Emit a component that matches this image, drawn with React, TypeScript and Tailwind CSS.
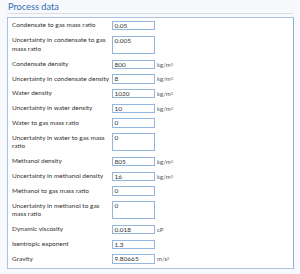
import React from 'react';

type Field = {
  label: React.ReactNode;
  value: string;
  unit?: React.ReactNode;
  tall?: boolean;
};

const kgm3 = (
  <>
    kg/m<sup className="text-[3.8px] relative -top-[1px]">3</sup>
  </>
);

const fields: Field[] = [
  { label: 'Condensate to gas mass ratio', value: '0.05' },
  { label: <>Uncertainty in condensate to gas<br />mass ratio</>, value: '0.005', tall: true },
  { label: 'Condensate density', value: '800', unit: kgm3 },
  { label: 'Uncertainty in condensate density', value: '8', unit: kgm3 },
  { label: 'Water density', value: '1020', unit: kgm3 },
  { label: 'Uncertainty in water density', value: '10', unit: kgm3 },
  { label: 'Water to gas mass ratio', value: '0' },
  { label: <>Uncertainty in water to gas mass<br />ratio</>, value: '0', tall: true },
  { label: 'Methanol density', value: '805', unit: kgm3 },
  { label: 'Uncertainty in methanol density', value: '16', unit: kgm3 },
  { label: 'Methanol to gas mass ratio', value: '0' },
  { label: <>Uncertainty in methanol to gas<br />mass ratio</>, value: '0', tall: true },
  { label: 'Dynamic viscosity', value: '0.018', unit: 'cP' },
  { label: 'Isentropic exponent', value: '1.3' },
  {
    label: 'Gravity',
    value: '9.80665',
    unit: (
      <>
        m/s<sup className="text-[3.8px] relative -top-[1px]">2</sup>
      </>
    ),
  },
];

function Row({ field }: { field: Field }) {
  return (
    <div className={`flex items-center ${field.tall ? 'h-[23.9px]' : 'h-[14.7px]'}`}>
      <div className="w-[100px] shrink-0 text-[6.5px] leading-[8.5px] text-[#333] whitespace-nowrap">
        {field.label}
      </div>
      <div
        className={`w-[43px] shrink-0 border border-[#93b6df] bg-white px-[1.5px] text-[6.5px] leading-[7.5px] text-[#333] ${
          field.tall ? 'h-[17.7px]' : 'h-[9.4px]'
        }`}
      >
        {field.value}
      </div>
      {field.unit && (
        <span className="ml-[2px] text-[6px] text-[#555] whitespace-nowrap">{field.unit}</span>
      )}
    </div>
  );
}

export default function App() {
  return (
    <div className="w-[300px] h-[274px] bg-[#f7f9fd] px-[7px] font-['Lato',sans-serif] overflow-hidden">
      {/* Header */}
      <div className="h-[14px] border-b border-[#d9dee5] pl-[1px] text-[9.2px] leading-[13px] text-[#2f6db3]">
        Process data
      </div>

      {/* Panel */}
      <div className="mt-[3px] w-[287px] border border-[#a8c2e2] border-r-[#8eaed6] bg-white pl-[4px] pt-[0.35px] pb-[2px]">
        {fields.map((f, i) => (
          <Row key={i} field={f} />
        ))}
      </div>
    </div>
  );
}
